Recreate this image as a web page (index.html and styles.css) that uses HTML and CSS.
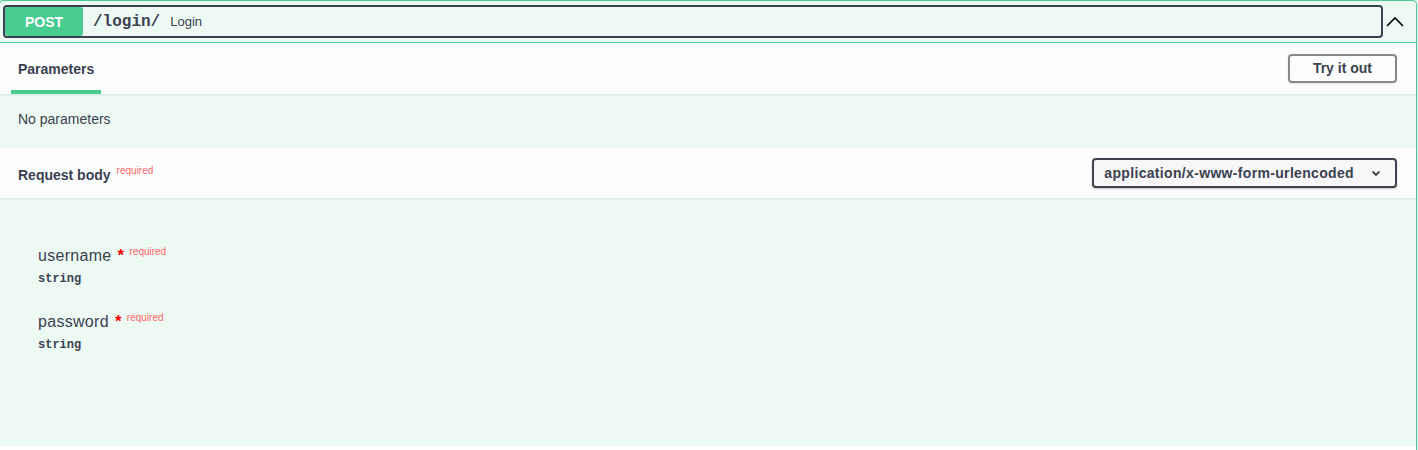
FILE: index.html
```html
<!DOCTYPE html>
<html lang="en">
<head>
<meta charset="utf-8">
<title>POST /login/</title>
<link rel="stylesheet" href="styles.css">
</head>
<body>
<div class="opblock">
  <div class="summary">
    <div class="summary-control">
      <span class="method">POST</span>
      <span class="path">/login/</span>
      <span class="desc">Login</span>
    </div>
    <svg class="arrow" width="20" height="20" viewBox="0 0 20 20" aria-hidden="true">
      <polyline points="2,14 10,6 18,14" fill="none" stroke="#000" stroke-width="1.6"/>
    </svg>
  </div>

  <div class="section-header tabs-header">
    <div class="tab"><span>Parameters</span></div>
    <button class="try-btn" type="button">Try it out</button>
  </div>
  <div class="no-params">No parameters</div>

  <div class="section-header rb-header">
    <div class="rb-title">Request body<span class="rb-required">required</span></div>
    <div class="select">
      <span class="select-text">application/x-www-form-urlencoded</span>
      <svg class="select-arrow" width="10" height="10" viewBox="0 0 10 10" aria-hidden="true">
        <polyline points="1.5,3.5 5,6.8 8.5,3.5" fill="none" stroke="#222" stroke-width="1.6"/>
      </svg>
    </div>
  </div>

  <div class="body">
    <div class="param">
      <div class="param-name">username<span class="star">*</span><span class="req">required</span></div>
      <div class="param-type">string</div>
    </div>
    <div class="param">
      <div class="param-name">password<span class="star">*</span><span class="req">required</span></div>
      <div class="param-type">string</div>
    </div>
  </div>
  <div class="tail"></div>
</div>
</body>
</html>
```

FILE: styles.css
```css
html, body {
  margin: 0;
  padding: 0;
  background: #fff;
  overflow: hidden;
}
body {
  font-family: "Liberation Sans", Arial, sans-serif;
  color: #3b4151;
}
.opblock {
  box-sizing: border-box;
  width: 1418px;
  margin-left: -1px;
  border: 1px solid #49cc90;
  border-radius: 4px;
  background: #edfaf4;
  box-shadow: 0 0 3px rgba(0,0,0,.19);
}
.summary {
  display: flex;
  align-items: center;
  padding: 4px 0 4px 3px;
  border-bottom: 1px solid #49cc90;
}
.summary-control {
  flex: 1;
  display: flex;
  align-items: center;
  border: 2px solid #3b4151;
  border-radius: 4px;
  min-width: 0;
}
.method {
  width: 78px;
  height: 29px;
  display: flex;
  align-items: center;
  justify-content: center;
  background: #49cc90;
  color: #fff;
  font-size: 14px;
  font-weight: 700;
  border-radius: 3px;
}
.path {
  font-family: "Liberation Mono", "DejaVu Sans Mono", monospace;
  font-size: 16px;
  font-weight: 700;
  padding: 0 10px;
  color: #3b4151;
}
.desc {
  font-size: 13px;
  color: #3b4151;
}
.arrow {
  flex: none;
  margin: 0 11px 0 2px;
}
.section-header {
  display: flex;
  align-items: center;
  justify-content: space-between;
  min-height: 50px;
  background: rgba(255,255,255,.8);
  box-shadow: 0 1px 2px rgba(0,0,0,.1);
  position: relative;
}
.tabs-header {
  padding: 0 19px 0 11px;
  min-height: 51px;
}
.tab {
  align-self: stretch;
  display: flex;
  align-items: center;
  padding: 0 7px;
  border-top: 4px solid transparent;
  border-bottom: 4px solid #49cc90;
  font-size: 14px;
  font-weight: 700;
}
.try-btn {
  font-family: "Liberation Sans", Arial, sans-serif;
  font-size: 14px;
  font-weight: 700;
  color: #3b4151;
  background: transparent;
  border: 2px solid #888;
  border-radius: 4px;
  padding: 5px 23px;
  line-height: 15px;
  box-shadow: 0 1px 2px rgba(0,0,0,.1);
}
.no-params {
  padding: 15px 18px 19px;
  font-size: 14px;
  line-height: 20px;
}
.rb-header {
  padding: 0 19px 0 18px;
}
.rb-title {
  font-size: 14px;
  font-weight: 700;
  line-height: 20px;
  padding-top: 3px;
}
.rb-required {
  font-size: 10px;
  font-weight: 400;
  line-height: 0;
  color: #ff6666;
  padding-left: 6px;
  vertical-align: 6px;
}
.select {
  display: flex;
  align-items: center;
  border: 2px solid #41444e;
  border-radius: 4px;
  background: #f7f7f7;
  padding: 5px 14px 5px 10px;
  box-shadow: 0 1px 2px rgba(0,0,0,.25);
}
.select-text {
  font-size: 14px;
  font-weight: 700;
  line-height: 16px;
  letter-spacing: .33px;
  color: #3b4151;
}
.select-arrow {
  margin-left: 17px;
}
.body {
  padding: 36px 20px 80px 38px;
}
.param {
  padding: 12px 0 14px;
}
.param-name {
  font-size: 16px;
  line-height: 20px;
  letter-spacing: .3px;
}
.star {
  color: red;
  font-weight: 700;
  font-size: 17px;
  line-height: 0;
  padding-left: 6px;
}
.req {
  font-size: 10px;
  line-height: 0;
  letter-spacing: 0;
  color: #ff6666;
  padding-left: 5px;
  vertical-align: 6px;
}
.param-type {
  margin-top: 6px;
  font-family: "Liberation Mono", "DejaVu Sans Mono", monospace;
  font-size: 12px;
  font-weight: 700;
  line-height: 14px;
}
.tail {
  height: 10px;
  background: #fff;
}
```
